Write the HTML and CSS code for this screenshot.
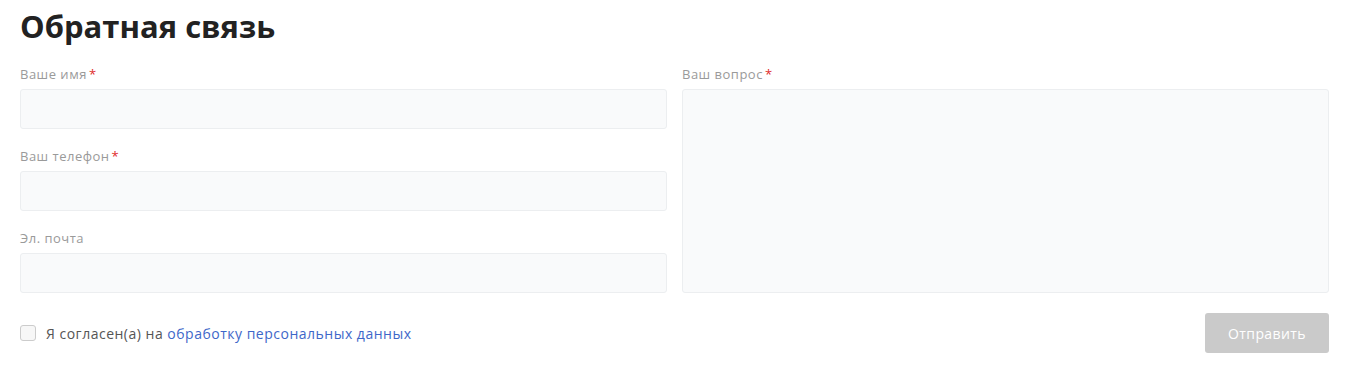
FILE: index.html
```html
<!DOCTYPE html>
<html lang="ru">
<head>
  <meta charset="UTF-8">
  <meta name="viewport" content="width=device-width, initial-scale=1.0">
  <title>Обратная связь</title>
  <link rel="stylesheet" href="styles.css">
</head>
<body>
  <div class="feedback">
    <h1 class="feedback-title">Обратная связь</h1>
    <form class="feedback-form">
      <div class="form-cols">
        <div class="form-col">
          <div class="field">
            <label class="field-label">Ваше имя<span class="req">*</span></label>
            <input class="field-input" type="text">
          </div>
          <div class="field">
            <label class="field-label">Ваш телефон<span class="req">*</span></label>
            <input class="field-input" type="text">
          </div>
          <div class="field">
            <label class="field-label">Эл. почта</label>
            <input class="field-input" type="text">
          </div>
        </div>
        <div class="form-col">
          <div class="field field-grow">
            <label class="field-label">Ваш вопрос<span class="req">*</span></label>
            <textarea class="field-input field-area"></textarea>
          </div>
        </div>
      </div>
      <div class="form-bottom">
        <label class="agree">
          <span class="agree-box"></span>
          <span>Я согласен(а) на <a href="#" class="agree-link">обработку персональных данных</a></span>
        </label>
        <button type="button" class="submit">Отправить</button>
      </div>
    </form>
  </div>
</body>
</html>
```

FILE: styles.css
```css
*{
  margin: 0;
  padding: 0;
  box-sizing: border-box;
}
body{
  font-family: "Open Sans", "Noto Sans", sans-serif;
  color: #333;
  background: #fff;
}
.feedback{
  padding: 6px 16px 0 20px;
}
.feedback-title{
  font-size: 31px;
  line-height: 40px;
  font-weight: 700;
  color: #222;
  margin-bottom: 19px;
}
.form-cols{
  display: flex;
  gap: 15px;
}
.form-col{
  flex: 1;
  display: flex;
  flex-direction: column;
  gap: 18px;
}
.field{
  display: flex;
  flex-direction: column;
}
.field-grow{
  flex: 1;
}
.field-label{
  font-size: 13px;
  line-height: 18px;
  color: #9a9a9a;
  letter-spacing: 0.5px;
  margin-bottom: 6px;
}
.req{
  color: #e02a2a;
  margin-left: 2px;
}
.field-input{
  height: 40px;
  background: #f9fafb;
  border: 1px solid #eceef0;
  border-radius: 3px;
  font: inherit;
  outline: none;
}
.field-area{
  flex: 1;
  resize: none;
}
.form-bottom{
  display: flex;
  justify-content: space-between;
  align-items: center;
  margin-top: 20px;
}
.agree{
  display: flex;
  align-items: center;
  font-size: 14px;
  letter-spacing: 0.5px;
  color: #555;
}
.agree-box{
  width: 16px;
  height: 16px;
  border: 1px solid #ccc;
  border-radius: 3px;
  background: #f7f7f7;
  margin-right: 10px;
}
.agree-link{
  color: #3e67c9;
  text-decoration: none;
}
.submit{
  width: 124px;
  height: 40px;
  border: none;
  border-radius: 3px;
  background: #cacaca;
  color: #fff;
  font: inherit;
  font-size: 14px;
  letter-spacing: 0.4px;
}
```
